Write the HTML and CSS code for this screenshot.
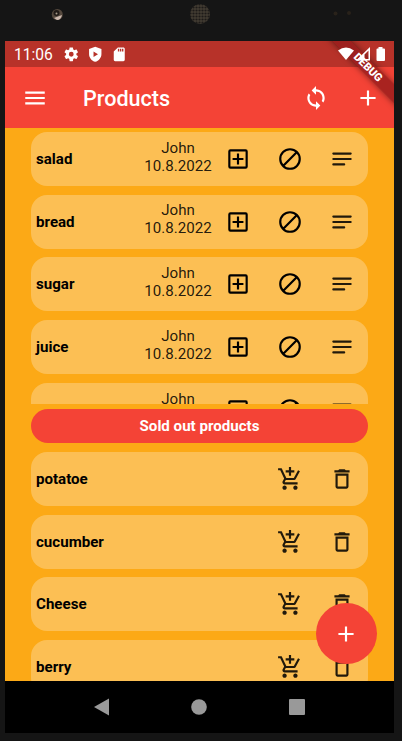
FILE: index.html
```html
<!DOCTYPE html>
<html lang="en">
<head>
<meta charset="utf-8">
<title>Products</title>
<link rel="stylesheet" href="styles.css">
</head>
<body>
<svg width="0" height="0" class="defs">
  <symbol id="addbox" viewBox="0 0 24 24"><path d="M19 3H5a2 2 0 0 0-2 2v14a2 2 0 0 0 2 2h14a2 2 0 0 0 2-2V5a2 2 0 0 0-2-2zm0 16H5V5h14v14zm-8-2h2v-4h4v-2h-4V7h-2v4H7v2h4z"/></symbol>
  <symbol id="block" viewBox="0 0 24 24"><path d="M12 3a9 9 0 1 0 0 18 9 9 0 0 0 0-18zM18.4 5.6 5.6 18.4" fill="none" stroke="currentColor" stroke-width="2"/></symbol>
  <symbol id="notes" viewBox="0 0 24 24"><path d="M4 7h16M4 12h16M4 17h10" stroke="currentColor" stroke-width="2" stroke-linecap="round"/></symbol>
  <symbol id="cart" viewBox="0 0 24 24"><path d="M11 9h2V6h3V4h-3V1h-2v3H8v2h3v3zm-4 9c-1.1 0-1.99.9-1.99 2S5.9 22 7 22s2-.9 2-2-.9-2-2-2zm10 0c-1.1 0-1.99.9-1.99 2s.89 2 1.99 2 2-.9 2-2-.9-2-2-2zm-9.83-3.25l.03-.12.9-1.63h7.45c.75 0 1.41-.41 1.75-1.03l3.86-7.01L19.42 4h-.01l-1.1 2-2.76 5H8.53l-.13-.27L6.16 6l-.95-2-.94-2H1v2h2l3.6 7.59-1.35 2.45c-.16.28-.25.61-.25.96 0 1.1.9 2 2 2h12v-2H7.42c-.13 0-.25-.11-.25-.25z"/></symbol>
  <symbol id="trash" viewBox="0 0 24 24"><path d="M6 19c0 1.1.9 2 2 2h8c1.1 0 2-.9 2-2V7H6v12zM8 9h8v10H8V9zm7.5-5l-1-1h-5l-1 1H5v2h14V4h-3.5z"/></symbol>
  <symbol id="plus" viewBox="0 0 24 24"><path d="M19 13h-6v6h-2v-6H5v-2h6V5h2v6h6z"/></symbol>
</svg>
<div class="phone">
  <div class="bezel">
    <svg width="402" height="41" viewBox="0 0 402 41">
      <defs><pattern id="mesh" width="3" height="3" patternUnits="userSpaceOnUse"><rect width="3" height="3" fill="#423b31"/><circle cx="1.5" cy="1.5" r="1.1" fill="#1d1a18"/></pattern></defs>
      <circle cx="57.3" cy="14.5" r="5.5" fill="#54483d"/><circle cx="56.5" cy="13" r="3" fill="#211b17"/><circle cx="56.5" cy="13.5" r="1" fill="#a89c8a"/><path d="M54 18l8-3q-1 5-5 5z" fill="#cdb9ae"/>
      <circle cx="200" cy="14" r="10" fill="url(#mesh)"/>
      <circle cx="335.5" cy="13.5" r="2" fill="#29221a"/><circle cx="349" cy="13" r="2" fill="#29221a"/>
    </svg>
  </div>
  <div class="screen">
    <header class="top">
      <div class="status">
        <span class="clock">11:06</span>
        <svg class="st" viewBox="0 0 24 24"><path d="M19.43 12.98c.04-.32.07-.64.07-.98s-.03-.66-.07-.98l2.11-1.65c.19-.15.24-.42.12-.64l-2-3.46c-.12-.22-.39-.3-.61-.22l-2.49 1c-.52-.4-1.08-.73-1.69-.98l-.38-2.65C14.46 2.18 14.25 2 14 2h-4c-.25 0-.46.18-.49.42l-.38 2.65c-.61.25-1.17.59-1.69.98l-2.49-1c-.23-.09-.49 0-.61.22l-2 3.46c-.13.22-.07.49.12.64l2.11 1.65c-.04.32-.07.65-.07.98s.03.66.07.98l-2.11 1.65c-.19.15-.24.42-.12.64l2 3.46c.12.22.39.3.61.22l2.49-1c.52.4 1.08.73 1.69.98l.38 2.65c.03.24.24.42.49.42h4c.25 0 .46-.18.49-.42l.38-2.65c.61-.25 1.17-.59 1.69-.98l2.49 1c.23.09.49 0 .61-.22l2-3.46c.12-.22.07-.49-.12-.64l-2.11-1.65zM12 15.5a3.5 3.5 0 1 1 0-7 3.5 3.5 0 0 1 0 7z"/></svg>
        <svg class="st" viewBox="0 0 24 24"><path fill-rule="evenodd" d="M12 1 3 4.500v7c0 5.500 3.800 9.800 9 11.500 5.200-1.700 9-6 9-11.500v-7zM9.500 8l6.500 4-6.500 4z"/></svg>
        <svg class="st" viewBox="0 0 24 24"><path d="M18 2h-8L4.020 8 4 20c0 1.100.9 2 2 2h12c1.100 0 2-.9 2-2V4c0-1.100-.9-2-2-2zm-6 6h-2V4h2v4zm3 0h-2V4h2v4zm3 0h-2V4h2v4z"/></svg>
        <svg class="signals" width="50" height="16" viewBox="0 0 50 16"><path d="M0 4.500Q8 -1.500 16 4.500L8 14z"/><path fill-rule="evenodd" d="M18 14.500 32 1v13.500zM26.500 8.500v4.500h4V4.600z"/><path d="M40.500 1h4v1.500H46q1 0 1 1V14q0 1-1 1h-6.500q-1 0-1-1V3.500q0-1 1-1h1z"/></svg>
      </div>
      <div class="appbar">
        <svg class="ic" viewBox="0 0 24 24"><path d="M3 18h18v-2H3v2zm0-5h18v-2H3v2zm0-7v2h18V6H3z"/></svg>
        <h1>Products</h1>
        <svg class="ic" viewBox="0 0 24 24"><path d="M12 4V1L8 5l4 4V6c3.310 0 6 2.690 6 6 0 1.010-.25 1.970-.7 2.800l1.460 1.460C19.540 15.030 20 13.570 20 12c0-4.420-3.580-8-8-8zm0 14c-3.310 0-6-2.690-6-6 0-1.010.25-1.970.7-2.800L5.240 7.740C4.460 8.970 4 10.430 4 12c0 4.420 3.580 8 8 8v3l4-4-4-4v3z"/></svg>
        <svg class="ic add"><use href="#plus"/></svg>
      </div>
      <div class="debug">DEBUG</div>
    </header>
    <section class="list active">
      <div class="card"><b>salad</b><p>John<br>10.8.2022</p><svg class="ic"><use href="#addbox"/></svg><svg class="ic"><use href="#block"/></svg><svg class="ic soft"><use href="#notes"/></svg></div>
      <div class="card"><b>bread</b><p>John<br>10.8.2022</p><svg class="ic"><use href="#addbox"/></svg><svg class="ic"><use href="#block"/></svg><svg class="ic soft"><use href="#notes"/></svg></div>
      <div class="card"><b>sugar</b><p>John<br>10.8.2022</p><svg class="ic"><use href="#addbox"/></svg><svg class="ic"><use href="#block"/></svg><svg class="ic soft"><use href="#notes"/></svg></div>
      <div class="card"><b>juice</b><p>John<br>10.8.2022</p><svg class="ic"><use href="#addbox"/></svg><svg class="ic"><use href="#block"/></svg><svg class="ic soft"><use href="#notes"/></svg></div>
      <div class="card"><b>i</b><p>John</p><svg class="ic"><use href="#addbox"/></svg><svg class="ic"><use href="#block"/></svg><svg class="ic soft"><use href="#notes"/></svg></div>
    </section>
    <h2>Sold out products</h2>
    <section class="list sold">
      <div class="card"><b>potatoe</b><svg class="ic soft"><use href="#cart"/></svg><svg class="ic soft"><use href="#trash"/></svg></div>
      <div class="card"><b>cucumber</b><svg class="ic soft"><use href="#cart"/></svg><svg class="ic soft"><use href="#trash"/></svg></div>
      <div class="card"><b>Cheese</b><svg class="ic soft"><use href="#cart"/></svg><svg class="ic soft"><use href="#trash"/></svg></div>
      <div class="card"><b>berry</b><svg class="ic soft"><use href="#cart"/></svg><svg class="ic soft"><use href="#trash"/></svg></div>
    </section>
    <div class="fab"><svg class="ic"><use href="#plus"/></svg></div>
    <nav>
      <svg width="18" height="18" viewBox="0 0 18 18"><path d="M1 9 16 .5v17z"/></svg>
      <svg width="18" height="18" viewBox="0 0 18 18"><circle cx="9" cy="9" r="7.800"/></svg>
      <svg width="18" height="18" viewBox="0 0 18 18"><rect x="1" y="1" width="16" height="16" rx="1"/></svg>
    </nav>
  </div>
</div>
</body>
</html>
```
FILE: styles.css
```css
* { box-sizing: border-box; margin: 0; padding: 0; }
body { background: #151515; font-family: Roboto, "Liberation Sans", sans-serif; overflow: hidden; }
.defs { position: absolute; }
svg { display: block; fill: currentColor; flex: none; }
.phone { width: 402px; height: 741px; }
.bezel { height: 41px; }
.screen { position: relative; width: 389px; height: 692px; margin-left: 5px; background: #fca916; display: flex; flex-direction: column; overflow: hidden; }
.top { position: relative; height: 86.500px; flex: none; overflow: hidden; background: #f44336; color: #fff; }
.status { height: 26px; display: flex; align-items: center; padding-left: 9px; background: #b73229; }
.clock { font-size: 15.6px; width: 49px; padding-top: 2px; }
.st { width: 16.500px; height: 16.500px; margin-right: 7.500px; }
.signals { position: relative; z-index: 1; margin-left: auto; margin-right: 6px; }
.appbar { height: 61px; display: flex; align-items: center; padding: 0 13px 0 17px; }
.ic { width: 26px; height: 26px; }
h1 { font-size: 21.6px; font-weight: 500; line-height: 26px; margin-left: 35px; padding-top: 2px; flex: 1; }
.add { margin-left: 26px; }
.debug { position: absolute; left: 313px; top: 19.500px; width: 100px; height: 13px; transform: rotate(45deg); background: rgba(150, 28, 28, .8); box-shadow: 0 0 6px rgba(0, 0, 0, .5); font-size: 11px; font-weight: 900; line-height: 13px; text-align: center; }
.list { flex: none; padding: 4.500px 26px 0; overflow: hidden; }
.active { height: 276.500px; }
.sold { height: 238px; padding-top: 9px; }
.card { height: 54px; margin-bottom: 8.700px; border-radius: 16px; background: #fcbf54; display: flex; align-items: center; padding: 0 13px 0 5px; color: #000; }
.card b { flex: 1; font-size: 15.100px; font-weight: 700; }
.card p { width: 68px; height: 35.400px; font-size: 15.100px; line-height: 17.700px; text-align: center; color: rgba(0, 0, 0, .87); margin: -3px 13px 0 0; }
.card .ic + .ic { margin-left: 26px; }
.soft { color: rgba(0, 0, 0, .87); }
h2 { height: 34px; flex: none; margin: 5px 26px 0; border-radius: 17px; background: #f44336; color: #fff; font-size: 15.100px; font-weight: 700; line-height: 35px; text-align: center; }
.fab { position: absolute; left: 311px; top: 562px; width: 61px; height: 61px; border-radius: 50%; background: #f44336; color: #fff; display: grid; place-items: center; }
.fab .ic { margin-right: 1px; }
nav { height: 52px; flex: none; background: #000; color: #999; display: flex; justify-content: center; align-items: center; gap: 79.500px; padding-right: 1px; }
```
